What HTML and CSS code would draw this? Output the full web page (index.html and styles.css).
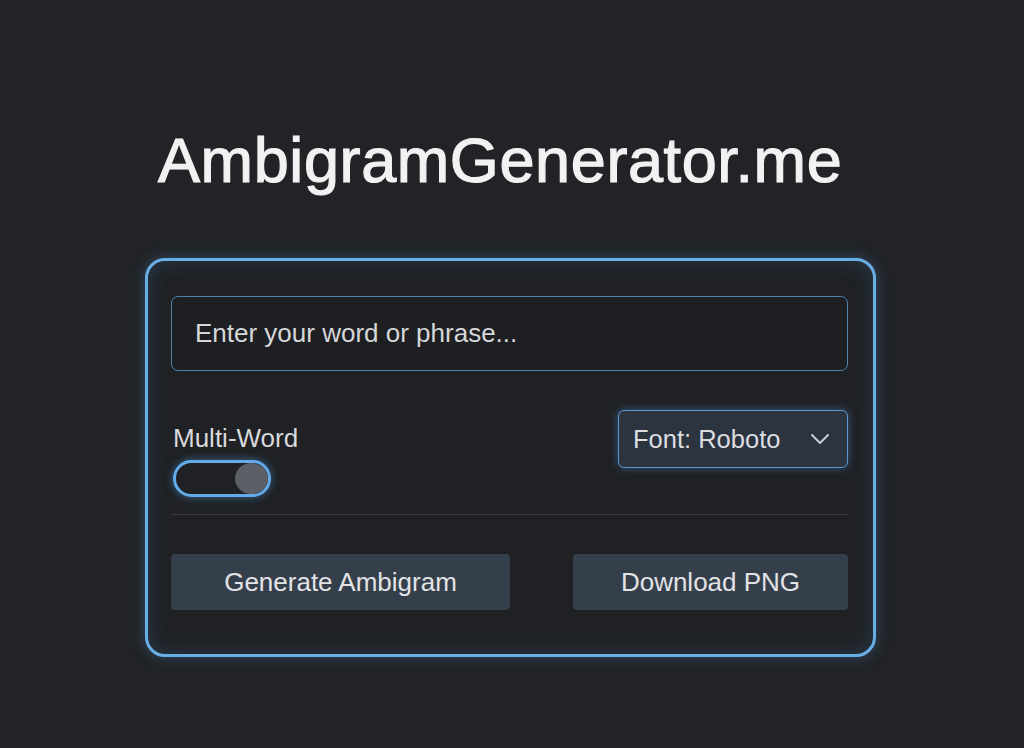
FILE: index.html
```html
<!DOCTYPE html>
<html lang="en">
<head>
<meta charset="utf-8">
<title>AmbigramGenerator.me</title>
<link rel="stylesheet" href="styles.css">
</head>
<body>
<main class="page">
  <h1 class="title">AmbigramGenerator.me</h1>
  <section class="card">
    <div class="input-box">Enter your word or phrase...</div>
    <div class="options">
      <div class="multi">
        <span class="multi-label">Multi-Word</span>
        <span class="toggle"><span class="knob"></span></span>
      </div>
      <div class="select">
        <span>Font: Roboto</span>
        <svg class="chev" width="20" height="12" viewBox="0 0 20 12"><path d="M2 2 L10 10 L18 2" fill="none" stroke="#c9ccd1" stroke-width="2" stroke-linecap="round" stroke-linejoin="round"/></svg>
      </div>
    </div>
    <div class="divider"></div>
    <div class="actions">
      <button class="btn btn-gen">Generate Ambigram</button>
      <button class="btn btn-dl">Download PNG</button>
    </div>
  </section>
</main>
</body>
</html>
```
FILE: styles.css
```css
html, body {
  margin: 0;
  padding: 0;
  background: #212326;
  height: 100%;
}
body {
  font-family: "Liberation Sans", Arial, sans-serif;
  color: #e4e5e7;
}
.page {
  width: 731px;
  margin-left: 145px;
  padding-top: 127px;
}
.title {
  margin: 0 0 0 13px;
  font-size: 63px;
  font-weight: 400;
  line-height: 66px;
  letter-spacing: 0.6px;
  color: #f2f2f2;
  -webkit-text-stroke: 1.2px #f2f2f2;
}
.card {
  margin-top: 65px;
  box-sizing: border-box;
  height: 399px;
  border: 3px solid #6aaee6;
  border-radius: 20px;
  padding: 35px 25px 0 23px;
  background: #1f2124;
  box-shadow: 0 0 14px rgba(80, 150, 220, 0.35), inset 0 0 20px rgba(80, 150, 220, 0.2);
}
.input-box {
  box-sizing: border-box;
  height: 75px;
  border: 1.5px solid #4f82b0;
  border-radius: 7px;
  background: #1d1f22;
  padding-left: 23px;
  display: flex;
  align-items: center;
  font-size: 26px;
  color: #d6d7d9;
}
.options {
  margin-top: 39px;
  display: flex;
  justify-content: space-between;
  align-items: flex-start;
}
.multi {
  display: flex;
  flex-direction: column;
  padding-left: 2px;
  padding-top: 14px;
}
.multi-label {
  font-size: 26px;
  line-height: 28px;
  color: #d8d9db;
}
.toggle {
  margin-top: 8px;
  box-sizing: border-box;
  width: 98px;
  height: 37px;
  border: 3px solid #62aaea;
  border-radius: 19px;
  background: #1f2124;
  box-shadow: 0 0 8px rgba(80, 160, 235, 0.55);
  display: flex;
  justify-content: flex-end;
  align-items: center;
}
.knob {
  width: 33px;
  height: 31px;
  border-radius: 50%;
  background: #5c5f66;
}
.select {
  box-sizing: border-box;
  width: 230px;
  height: 58px;
  border: 1.5px solid #5b98d0;
  border-radius: 6px;
  background: #2c3440;
  box-shadow: 0 0 10px rgba(80, 150, 225, 0.45);
  display: flex;
  align-items: center;
  justify-content: space-between;
  padding: 0 17px 0 14px;
  font-size: 25.5px;
  color: #dcdde0;
}
.chev {
  display: block;
}
.divider {
  margin-top: 17px;
  height: 1px;
  background: #393c41;
}
.actions {
  margin-top: 39px;
  display: flex;
  justify-content: space-between;
}
.btn {
  height: 56px;
  border: none;
  border-radius: 4px;
  background: #353f4b;
  color: #e2e3e5;
  font-family: "Liberation Sans", Arial, sans-serif;
  font-size: 26px;
  padding: 0;
}
.btn-gen { width: 339px; }
.btn-dl { width: 275px; }
```
